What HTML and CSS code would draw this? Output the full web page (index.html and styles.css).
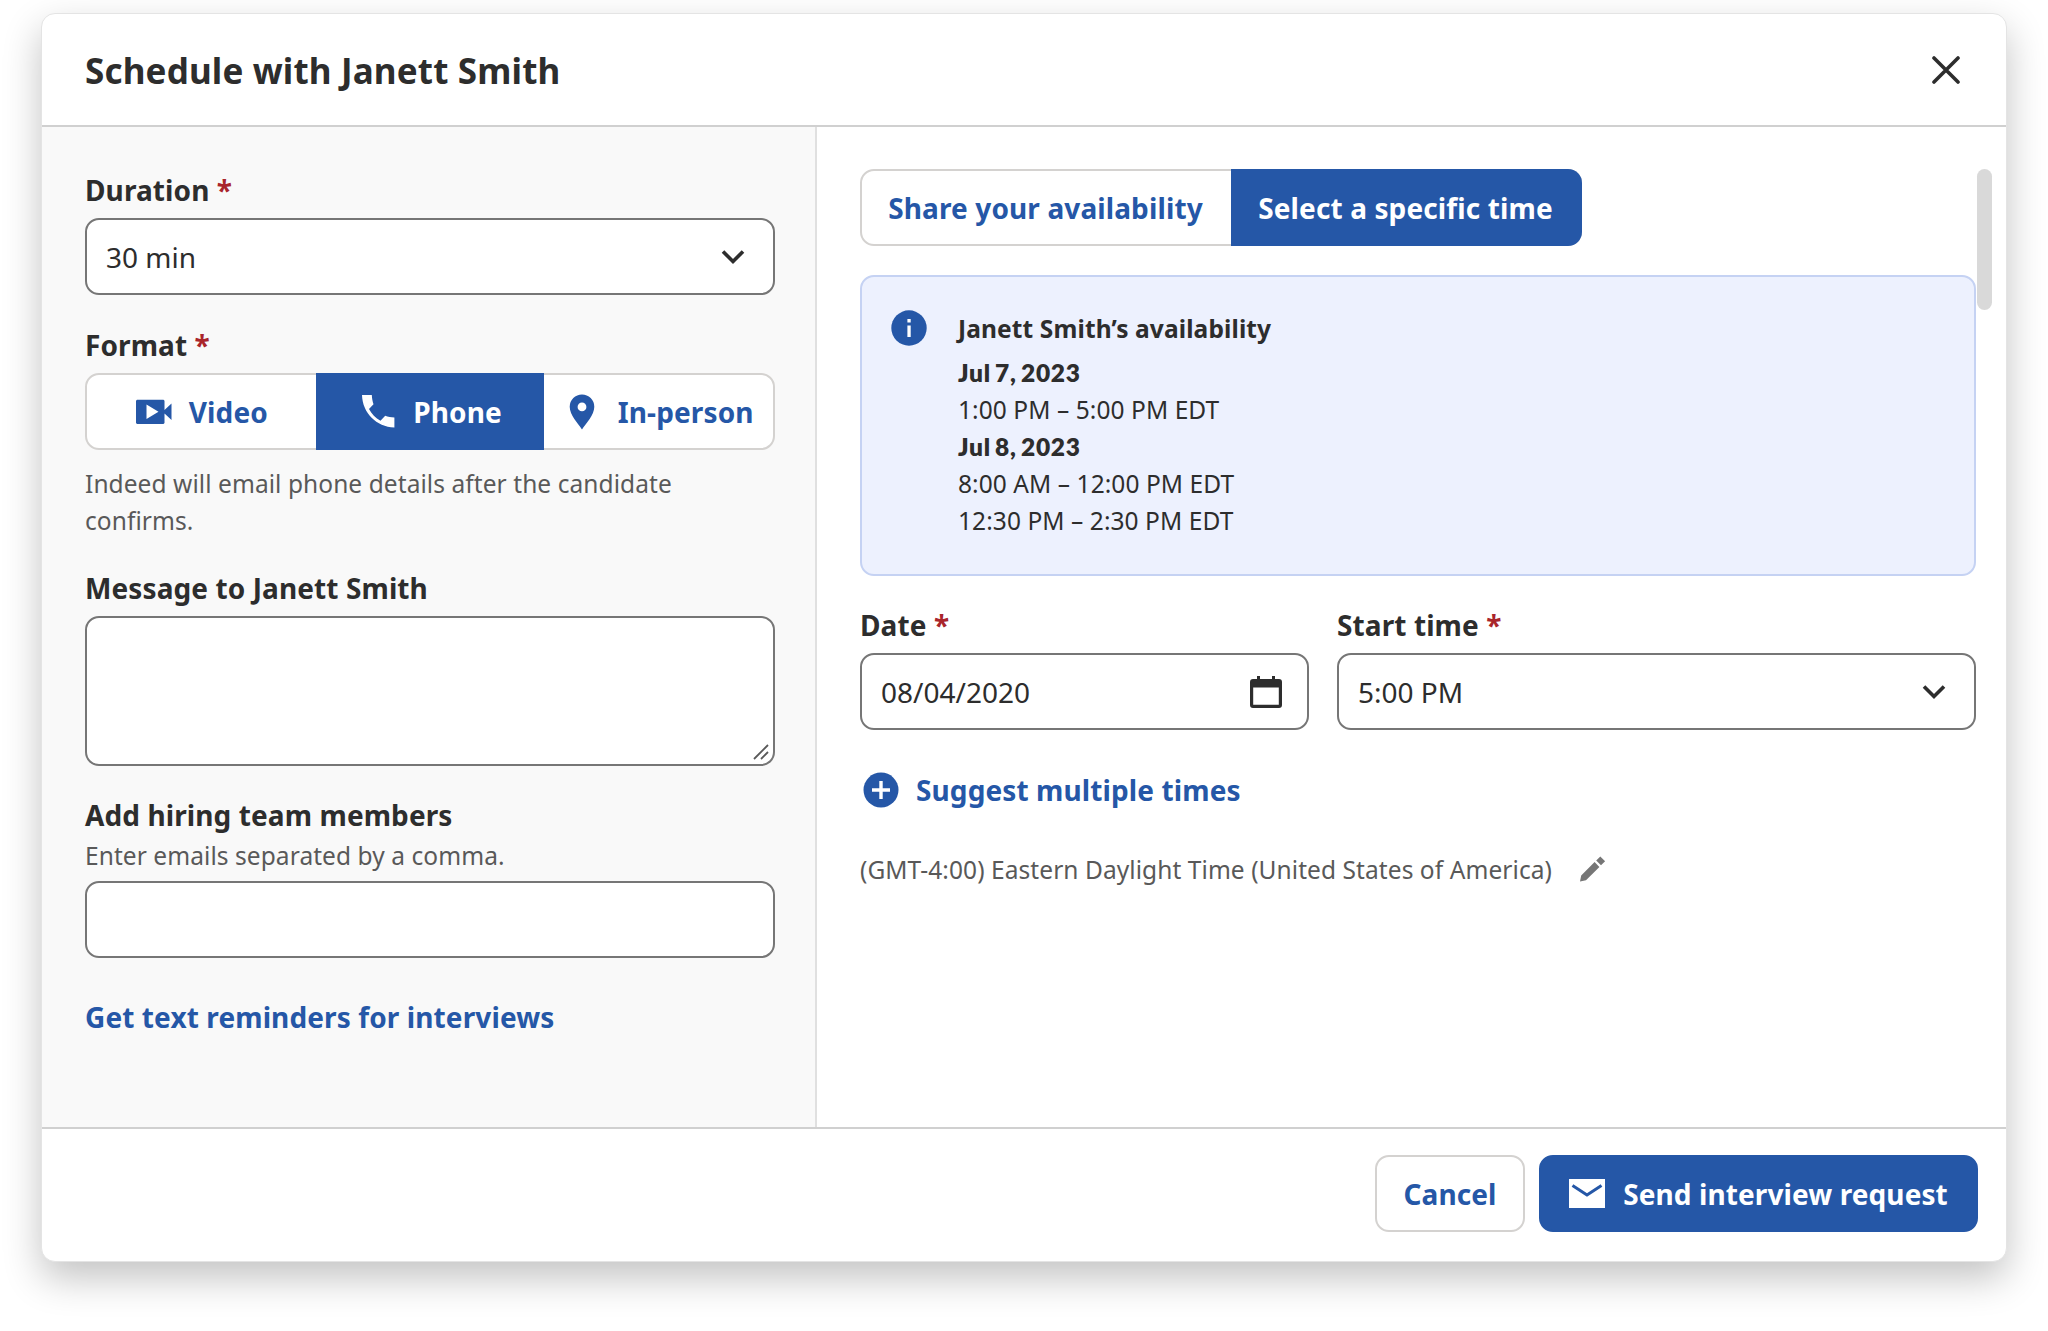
FILE: index.html
```
<!DOCTYPE html>
<html lang="en">
<head>
  <meta charset="UTF-8">
  <meta name="viewport" content="width=device-width, initial-scale=1.0">
  <title>Schedule with Janett Smith</title>
  <link rel="stylesheet" href="styles.css">
</head>
<body>
  <div class="modal">
    <!-- Header -->
    <header class="modal-header">
      <h1>Schedule with Janett Smith</h1>
      <button class="close" aria-label="Close">
        <svg width="28" height="28" viewBox="0 0 28 28"><path d="M2 2l24 24M26 2L2 26" fill="none" stroke="currentColor" stroke-width="3.6" stroke-linecap="round"/></svg>
      </button>
    </header>

    <main class="modal-body">
      <!-- Interview details -->
      <section class="details">
        <div class="field">
          <div class="label">Duration <span class="required">*</span></div>
          <div class="control">
            <span>30 min</span>
            <svg class="chevron" width="24" height="16" viewBox="0 0 24 16"><path d="M2 2.5L12 12.5 22 2.5" fill="none" stroke="currentColor" stroke-width="3.6"/></svg>
          </div>
        </div>

        <div class="field format">
          <div class="label">Format <span class="required">*</span></div>
          <div class="segments">
            <button class="segment video">
              <svg width="36" height="26" viewBox="0 0 36 26"><path fill="currentColor" fill-rule="evenodd" d="M1 .8H27.500L28.500 1.800V11L35.500 4.500V21L28.500 14.500V24L27.500 25H1L0 24V1.800ZM10.500 5.500V20L22.500 12.800Z"/></svg>
              Video
            </button>
            <button class="segment active phone">
              <svg width="33" height="33" viewBox="0 0 33 33"><path fill="currentColor" d="M0 0H9.800C10 3.300 10.500 6.400 11.500 9.300L7 14C9.600 19 13.500 23.200 18.500 25.700L23.200 20.800C26 21.900 29 22.400 32.400 22.500V32.400C14.500 32 .5 18 0 0Z"/></svg>
              Phone
            </button>
            <button class="segment person">
              <svg width="26" height="36" viewBox="0 0 26 36"><path fill="currentColor" fill-rule="evenodd" d="M13 .5A12.300 12.300 0 0 1 25.300 12.800C25.300 21 17 29.500 13 35.500C9 29.500.7 21 .7 12.800A12.300 12.300 0 0 1 13 .5ZM13 8.500A4.400 4.400 0 1 0 13 17.300A4.400 4.400 0 1 0 13 8.500Z"/></svg>
              In-person
            </button>
          </div>
          <p class="hint">Indeed will email phone details after the candidate confirms.</p>
        </div>

        <div class="field message">
          <div class="label">Message to Janett Smith</div>
          <div class="control textarea">
            <svg width="16" height="16" viewBox="0 0 16 16"><path d="M1 15L15 1M8 15L15 8" fill="none" stroke="currentColor" stroke-width="1.800"/></svg>
          </div>
        </div>

        <div class="field team">
          <div class="label">Add hiring team members</div>
          <p class="hint">Enter emails separated by a comma.</p>
          <div class="control"></div>
        </div>

        <a class="link" href="#">Get text reminders for interviews</a>
      </section>

      <!-- Time selection -->
      <section class="times">
        <div class="scroll-thumb"></div>
        <div class="segments tabs">
          <button class="segment">Share your availability</button>
          <button class="segment active">Select a specific time</button>
        </div>

        <div class="notice">
          <svg width="36" height="36" viewBox="0 0 36 36"><circle cx="18" cy="18" r="17.700" fill="#2557a7"/><rect x="16.400" y="15.500" width="3.300" height="11.500" fill="#fff"/><rect x="16.400" y="9" width="3.300" height="3.500" fill="#fff"/></svg>
          <div class="notice-text">
            <h2>Janett Smith’s availability</h2>
            <p class="day">Jul 7, 2023</p>
            <p>1:00 PM – 5:00 PM EDT</p>
            <p class="day">Jul 8, 2023</p>
            <p>8:00 AM – 12:00 PM EDT</p>
            <p>12:30 PM – 2:30 PM EDT</p>
          </div>
        </div>

        <div class="when">
          <div class="field date">
            <div class="label">Date <span class="required">*</span></div>
            <div class="control">
              <span>08/04/2020</span>
              <svg class="calendar" width="34" height="34" viewBox="0 0 34 34"><path fill="currentColor" fill-rule="evenodd" d="M8 1H11V4H23V1H26V4H30Q33 4 33 7V30Q33 33 30 33H4Q1 33 1 30V7Q1 4 4 4H8ZM4.200 12.500V29.800H29.800V12.500Z"/></svg>
            </div>
          </div>
          <div class="field start">
            <div class="label">Start time <span class="required">*</span></div>
            <div class="control">
              <span>5:00 PM</span>
              <svg class="chevron" width="24" height="16" viewBox="0 0 24 16"><path d="M2 2.500L12 12.500 22 2.500" fill="none" stroke="currentColor" stroke-width="3.600"/></svg>
            </div>
          </div>
        </div>

        <a class="link suggest" href="#">
          <svg width="36" height="36" viewBox="0 0 36 36"><circle cx="18" cy="18" r="17.500" fill="currentColor"/><path d="M18 9V27M9 18H27" stroke="#fff" stroke-width="3.400"/></svg>
          Suggest multiple times
        </a>

        <div class="timezone">
          <span>(GMT-4:00) Eastern Daylight Time (United States of America)</span>
          <svg width="26" height="26" viewBox="0 0 26 26"><path fill="#767676" d="M0 25.500L1.200 19.500L14.600 6.100L19.400 10.900L6 24.300ZM16.200 4.500L20.300.4L25.100 5.200L21 9.300Z"/></svg>
        </div>
      </section>
    </main>

    <!-- Footer -->
    <footer class="modal-footer">
      <button class="button">Cancel</button>
      <button class="button primary">
        <svg width="36" height="30" viewBox="0 0 36 30"><path fill="currentColor" d="M0 0H36V29H0Z"/><path d="M3.500 6.500L18 16 32.500 6.500" fill="none" stroke="#2557a7" stroke-width="3"/></svg>
        Send interview request
      </button>
    </footer>
  </div>
</body>
</html>
```
FILE: styles.css
```
/* General Reset */
* {
  margin: 0;
  padding: 0;
  box-sizing: border-box;
}

body {
  font-family: "Noto Sans", sans-serif;
  font-size: 28px;
  line-height: 42px;
  background-color: #fff;
  color: #2d2d2d;
  min-height: 100vh;
  padding: 13px 41px 0;
}

button {
  font: inherit;
  border: none;
  background: none;
}

svg {
  flex: none;
  display: block;
}

/* Modal */
.modal {
  width: 1966px;
  height: 1249px;
  display: flex;
  flex-direction: column;
  border: 1px solid #e4e4e4;
  border-radius: 14px;
  background-color: #fff;
  box-shadow: 0 16px 38px rgba(0, 0, 0, 0.24);
}

.modal-header {
  height: 113px;
  display: flex;
  align-items: center;
  justify-content: space-between;
  padding: 0 46px 0 43px;
  border-bottom: 2px solid #d0d0d0;
}

.modal-header h1 {
  font-size: 35px;
  line-height: 46px;
  font-weight: 700;
  letter-spacing: 0.16px;
  padding-top: 3px;
}

.close {
  color: #2d2d2d;
}

.modal-body {
  flex: 1;
  display: flex;
}

.details {
  width: 775px;
  padding: 42px 40px 0 43px;
  background-color: #f9f9f9;
  border-right: 2px solid #e0e0e0;
}

/* Fields */
.label {
  font-weight: 700;
  letter-spacing: 0.1px;
  margin-bottom: 7px;
}

.required {
  color: #a9252b;
}

.control {
  height: 77px;
  display: flex;
  align-items: center;
  justify-content: space-between;
  padding: 0 19px;
  border: 2px solid #767676;
  border-radius: 14px;
  background-color: #fff;
}

.chevron {
  margin-right: 9px;
}

.calendar {
  margin-right: 5px;
}

.format {
  margin-top: 29px;
}

.hint {
  font-size: 24.5px;
  line-height: 37px;
  letter-spacing: 0.07px;
  color: #595959;
}

.format .hint {
  margin-top: 15px;
}

.message {
  margin-top: 28px;
}

.textarea {
  height: 150px;
  align-items: flex-end;
  justify-content: flex-end;
  padding: 0 4px 4px;
  color: #595959;
}

.team {
  margin-top: 28px;
}

.team .label {
  margin-bottom: 1px;
}

.team .hint {
  margin-bottom: 7px;
}

.link {
  font-weight: 700;
  letter-spacing: 0.11px;
  color: #2557a7;
  text-decoration: none;
}

.details .link {
  display: block;
  margin-top: 38px;
}

/* Segmented buttons */
.segments {
  display: flex;
  height: 77px;
  border: 2px solid #d4d2d0;
  border-radius: 14px;
  background-color: #fff;
}

.segment {
  flex: 1 1 33.33%;
  display: flex;
  align-items: center;
  justify-content: center;
  gap: 17px;
  font-weight: 700;
  letter-spacing: 0.12px;
  color: #2557a7;
}

.segment.active {
  margin: -2px 0;
  background-color: #2557a7;
  color: #fff;
}

.segment.video {
  padding-left: 1px;
}

.segment.phone {
  gap: 18px;
  padding-left: 4px;
}

.segment.person {
  gap: 23px;
  padding-left: 5px;
}

.tabs {
  width: 722px;
}

.tabs .segment {
  flex: 0 0 369px;
  padding-right: 2px;
}

.tabs .segment.active {
  flex: 1;
  margin-right: -2px;
  border-radius: 0 14px 14px 0;
}

/* Time selection */
.times {
  position: relative;
  flex: 1;
  padding: 42px 30px 0 43px;
}

.scroll-thumb {
  position: absolute;
  top: 42px;
  right: 14px;
  width: 15px;
  height: 141px;
  border-radius: 8px;
  background-color: #d9d9d9;
}

.notice {
  display: flex;
  height: 301px;
  margin-top: 29px;
  padding: 33px 29px;
  gap: 31px;
  border: 2px solid #c5d2f3;
  border-radius: 14px;
  background-color: #edf1fe;
}

.notice-text {
  font-size: 24.5px;
  line-height: 37px;
  letter-spacing: 0.07px;
}

.notice h2 {
  font-size: 24.5px;
  line-height: 37px;
  font-weight: 700;
  letter-spacing: 0.12px;
  margin-bottom: 7px;
}

.day {
  font-family: Lato, sans-serif;
  font-weight: 800;
  letter-spacing: 0.7px;
  word-spacing: -2px;
}

.when {
  display: flex;
  gap: 28px;
  margin-top: 28px;
}

.date {
  width: 449px;
}

.start {
  flex: 1;
}

.suggest {
  display: flex;
  align-items: center;
  gap: 17px;
  margin: 39px 0 0 3px;
}

.timezone {
  display: flex;
  align-items: center;
  gap: 28px;
  margin-top: 40px;
  font-size: 24.5px;
  line-height: 37px;
  letter-spacing: 0.07px;
  color: #595959;
}

.timezone svg {
  margin-bottom: 2px;
}

/* Footer */
.modal-footer {
  height: 134px;
  display: flex;
  align-items: center;
  justify-content: flex-end;
  gap: 14px;
  padding: 0 28px 3px 0;
  border-top: 2px solid #d0d0d0;
}

.button {
  height: 77px;
  width: 150px;
  display: flex;
  align-items: center;
  justify-content: center;
  gap: 18px;
  border: 2px solid #d4d2d0;
  border-radius: 14px;
  font-weight: 700;
  letter-spacing: 0.1px;
  color: #2557a7;
}

.button.primary {
  width: 439px;
  border-color: #2557a7;
  background-color: #2557a7;
  color: #fff;
}
```
